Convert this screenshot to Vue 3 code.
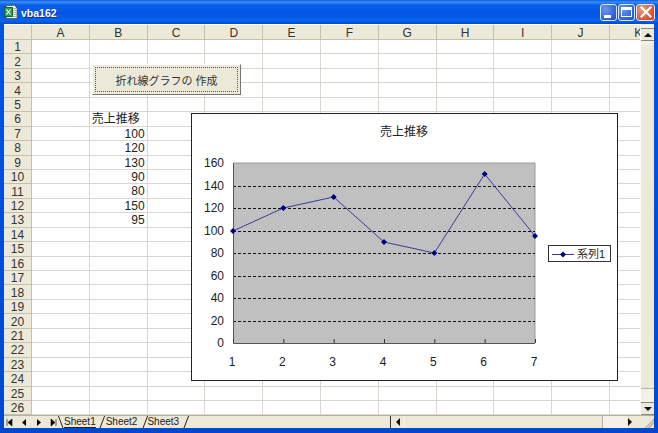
<template>
  <div class="window">
    <div class="titlebar">
      <svg class="appicon" width="14" height="14" viewBox="0 0 14 14">
        <path d="M2.500 .5h8l2.500 2.500v10.500h-10.500z" fill="#fff" stroke="#4f6f60" />
        <path d="M8 3.500h4M8 5.500h4M8 7.500h4M8 9.500h4M8 11.500h4" stroke="#8fc79a" />
        <rect x=".5" y="2.500" width="8" height="9" fill="#2f9e52" stroke="#14682e" />
        <path d="M2.500 4.500l4 5M6.500 4.500l-4 5" stroke="#fff" stroke-width="1.200" />
      </svg>
      <span class="title">vba162</span>
      <div class="winbtns">
        <div class="winbtn">
          <span class="min-glyph"></span>
        </div>
        <div class="winbtn">
          <span class="max-glyph"></span>
        </div>
        <div class="winbtn close">
          <svg width="12" height="12" viewBox="0 0 12 12">
            <path d="M1.500 1.500l9 9M10.500 1.500l-9 9" stroke="#fff" stroke-width="2.200" stroke-linecap="square" />
          </svg>
        </div>
      </div>
    </div>

    <div class="client">
      <div class="main">
        <div class="sheet">
          <div class="grid">
            <div class="corner"></div>
            <div v-for="c in columns" :key="c" class="colhead">{{ c }}</div>
            <template v-for="r in 26" :key="r">
              <div class="rowhead">{{ r }}</div>
              <div
                v-for="c in columns"
                :key="c"
                class="cell"
                :class="{ num: c === 'B' && r > 6 }"
              >{{ c === 'B' ? cellValue(r) : '' }}</div>
            </template>
          </div>

          <div class="macro-btn"><span class="macro-focus">折れ線グラフの 作成</span></div>

          <svg class="chart" width="427" height="268" viewBox="191 113 427 268">
            <rect x="191.500" y="113.500" width="426" height="267" fill="#fff" stroke="#222" />
            <text x="404" y="136" text-anchor="middle" class="ct">売上推移</text>
            <rect x="233" y="163" width="302" height="180" fill="#c0c0c0" />
            <path d="M233 163h302v180" fill="none" stroke="#9a9a9a" />
            <path
              v-for="v in gridValues"
              :key="v"
              :d="`M233 ${yOf(v) + 0.5}H535`"
              stroke="#111"
              stroke-dasharray="3 2"
            />
            <path d="M233.500 163V343.500H535" fill="none" stroke="#555" />
            <path
              v-for="i in 7"
              :key="'t' + i"
              :d="`M${xOf(i - 1) + 0.5} 339V343`"
              stroke="#333"
            />
            <polyline :points="linePoints" fill="none" stroke="#3c3c94" />
            <path
              v-for="(v, i) in values"
              :key="'m' + i"
              :d="`M${xOf(i)} ${yOf(v) - 3}l3 3l-3 3l-3 -3z`"
              fill="#000080"
            />
            <text v-for="v in axisValues" :key="'y' + v" x="224" :y="yOf(v) + 4" text-anchor="end" class="ct">{{ v }}</text>
            <text v-for="i in 7" :key="'x' + i" :x="xOf(i - 1) - 1" y="366" text-anchor="middle" class="ct">{{ i }}</text>

            <rect x="548.500" y="245.500" width="62" height="16" fill="#fff" stroke="#333" />
            <path d="M552 254.500H574" stroke="#3c3c94" />
            <path d="M563 251.500l3 3l-3 3l-3 -3z" fill="#000080" />
            <text x="577" y="258" class="ct legend">系列1</text>
          </svg>
        </div>

        <div class="vscroll">
          <div class="sbtn up"><span class="arrow-up"></span></div>
          <div class="vthumb"></div>
          <div class="vtrack"></div>
          <div class="sbtn down"><span class="arrow-down"></span></div>
        </div>
      </div>

      <div class="bottom">
        <div class="tabnav">
          <svg width="54" height="13" viewBox="0 0 54 13">
            <path d="M3 3v7M4 6.500l4 -3.500v7z" fill="#000" stroke="#000" stroke-width=".6" />
            <path d="M22 3v7l-4 -3.500z" fill="#000" />
            <path d="M33 3v7l4 -3.500z" fill="#000" />
            <path d="M52 3v7M51 6.500l-4 -3.500v7z" fill="#000" stroke="#000" stroke-width=".6" />
          </svg>
        </div>
        <div class="tabs">
          <svg class="tabline" width="142" height="13" viewBox="0 0 142 13">
            <path d="M0 0l5 13M42 13l5 -13M85 13l5 -13M126 13l5 -13" fill="none" stroke="#222" />
          </svg>
          <span class="tab active">Sheet1</span>
          <span class="tab">Sheet2</span>
          <span class="tab">Sheet3</span>
        </div>
        <div class="hscroll">
          <div class="sbtn left"><span class="arrow-left"></span></div>
          <div class="hthumb"></div>
          <div class="htrack"></div>
          <div class="sbtn right"><span class="arrow-right"></span></div>
        </div>
        <div class="grip"></div>
      </div>
    </div>
  </div>
</template>

<script setup>
const columns = ['A', 'B', 'C', 'D', 'E', 'F', 'G', 'H', 'I', 'J', 'K']
const values = [100, 120, 130, 90, 80, 150, 95]
const gridValues = [20, 40, 60, 80, 100, 120, 140]
const axisValues = [0, 20, 40, 60, 80, 100, 120, 140, 160]

function cellValue(r) {
  if (r === 6) return '売上推移'
  if (r > 6 && r <= 13) return values[r - 7]
  return ''
}

function xOf(i) {
  return 233 + (i * 302) / 6
}

function yOf(v) {
  return Math.round(343 - (v * 180) / 160)
}

const linePoints = values.map((v, i) => `${xOf(i)},${yOf(v)}`).join(' ')
</script>

<style scoped>
.window {
  width: 658px;
  height: 433px;
  display: flex;
  flex-direction: column;
  box-sizing: border-box;
  padding: 0 4px 5px;
  background: linear-gradient(180deg, #0a4fd6 0, #0054e3 60px, #0048d0 100%);
  font-family: "Liberation Sans", "Noto Sans CJK JP", sans-serif;
  font-size: 12px;
  color: #222;
  overflow: hidden;
}

.titlebar {
  height: 24px;
  flex: none;
  display: flex;
  align-items: center;
  margin: 0 -4px;
  padding: 0 3px 0 4px;
  background: linear-gradient(180deg, #0a5ae6 0, #3b8df5 2px, #0a5fe8 5px, #0055e5 14px, #0a63ee 21px, #0046c8 24px);
}

.appicon {
  flex: none;
}

.title {
  margin-left: 3px;
  padding-top: 1px;
  color: #fff;
  font-size: 10.500px;
  font-weight: bold;
  text-shadow: 1px 1px 0 #0a2f8f;
}

.winbtns {
  margin-left: auto;
  display: flex;
  gap: 1px;
}

.winbtn {
  position: relative;
  width: 17px;
  height: 17px;
  box-sizing: border-box;
  border: 1px solid #dfe8fb;
  border-radius: 3px;
  background: radial-gradient(circle at 30% 30%, #6e97ef, #2d5fd8 70%, #2450c4);
  display: flex;
  align-items: center;
  justify-content: center;
}

.winbtn.close {
  width: 19px;
  background: radial-gradient(circle at 30% 30%, #ec9a7f, #d9532c 70%, #c5401e);
}

.min-glyph {
  align-self: flex-end;
  margin: 0 3px 2px 0;
  width: 7px;
  height: 3px;
  background: #fff;
}

.max-glyph {
  width: 11px;
  height: 10px;
  box-sizing: border-box;
  border: 1px solid #fff;
  border-top-width: 3px;
}

.client {
  flex: 1;
  min-height: 0;
  display: flex;
  flex-direction: column;
  background: #ece9d8;
}

.main {
  flex: 1;
  min-height: 0;
  display: flex;
}

.sheet {
  position: relative;
  flex: 1;
  min-width: 0;
  overflow: hidden;
  background: #fff;
}

.grid {
  display: grid;
  grid-template-columns: 28px repeat(11, 57.800px);
  grid-template-rows: 15px repeat(26, 14.440px);
  margin-top: 1px;
}

.corner,
.colhead,
.rowhead {
  background: #ece9d8;
  box-sizing: border-box;
  padding-top: 1px;
  border-right: 1px solid #c4bfae;
  border-bottom: 1px solid #c4bfae;
  display: flex;
  align-items: center;
  justify-content: center;
  color: #333;
  overflow: hidden;
}

.cell {
  box-sizing: border-box;
  border-right: 1px solid #dad7d0;
  border-bottom: 1px solid #dad7d0;
  padding: 1px 2px 0;
  line-height: 13px;
  white-space: nowrap;
  color: #222;
}

.cell.num {
  text-align: right;
}

.macro-btn {
  position: absolute;
  left: 88px;
  top: 40px;
  width: 149px;
  height: 31px;
  box-sizing: border-box;
  padding: 2px;
  background: #ece9d8;
  border: 1px solid;
  border-color: #fff #77756c #77756c #fff;
  display: flex;
}

.macro-focus {
  flex: 1;
  display: flex;
  align-items: center;
  justify-content: center;
  border: 1px dotted #555;
  font-size: 11px;
  color: #333;
}

.chart {
  position: absolute;
  left: 187px;
  top: 89px;
  display: block;
}

.ct {
  font-family: "Liberation Sans", "Noto Sans CJK JP", sans-serif;
  font-size: 12px;
  fill: #222;
}

.ct.legend {
  font-size: 11px;
}

.vscroll {
  width: 14px;
  flex: none;
  display: flex;
  flex-direction: column;
  padding-top: 4px;
  background: #f4f2e8;
  border-left: 1px solid #fff;
  box-sizing: border-box;
}

.sbtn {
  flex: none;
  background: #ece9d8;
  display: flex;
  align-items: center;
  justify-content: center;
  box-sizing: border-box;
}

.sbtn.up,
.sbtn.down {
  height: 13px;
  border-top: 1px solid #8a8778;
  border-bottom: 1px solid #8a8778;
}

.vthumb {
  margin-top: 4px;
  height: 343px;
  flex: none;
  background: #ece9d8;
  border-bottom: 1px solid #b5b2a2;
}

.vtrack {
  flex: 1;
}

.arrow-up,
.arrow-down,
.arrow-left,
.arrow-right {
  width: 0;
  height: 0;
  border: 4px solid transparent;
}

.arrow-up {
  border-top-width: 0;
  border-bottom-color: #111;
}

.arrow-down {
  border-bottom-width: 0;
  border-top-color: #111;
}

.arrow-left {
  border-left-width: 0;
  border-right-color: #111;
}

.arrow-right {
  border-right-width: 0;
  border-left-color: #111;
}

.bottom {
  height: 13px;
  flex: none;
  display: flex;
  align-items: stretch;
  border-top: 1px solid #b5b2a2;
  box-sizing: border-box;
}

.tabnav {
  width: 54px;
  flex: none;
}

.tabs {
  position: relative;
  width: 332px;
  flex: none;
  box-sizing: border-box;
  padding-left: 6px;
  display: flex;
  gap: 10px;
  font-size: 10px;
  line-height: 12px;
  overflow: hidden;
}

.tabline {
  position: absolute;
  left: 0;
  top: -1px;
}

.tab {
  color: #222;
}

.tab.active {
  border-bottom: 1px solid #222;
  height: 11px;
  line-height: 12px;
}

.hscroll {
  width: 246px;
  flex: none;
  display: flex;
  border-left: 1px solid #333;
  background: #f4f2e8;
  box-sizing: border-box;
}

.sbtn.left {
  width: 13px;
}

.sbtn.right {
  width: 9px;
  padding-right: 3px;
}

.hthumb {
  width: 197px;
  margin-left: 1px;
  background: #ece9d8;
  border-right: 1px solid #b5b2a2;
}

.htrack {
  flex: 1;
}

.grip {
  flex: 1;
  background: linear-gradient(135deg, #ece9d8 70%, #b5b2a2 70%, #ece9d8 80%, #b5b2a2 80%, #ece9d8 90%);
}
</style>

<style>
html,
body {
  margin: 0;
  overflow: hidden;
}
</style>
